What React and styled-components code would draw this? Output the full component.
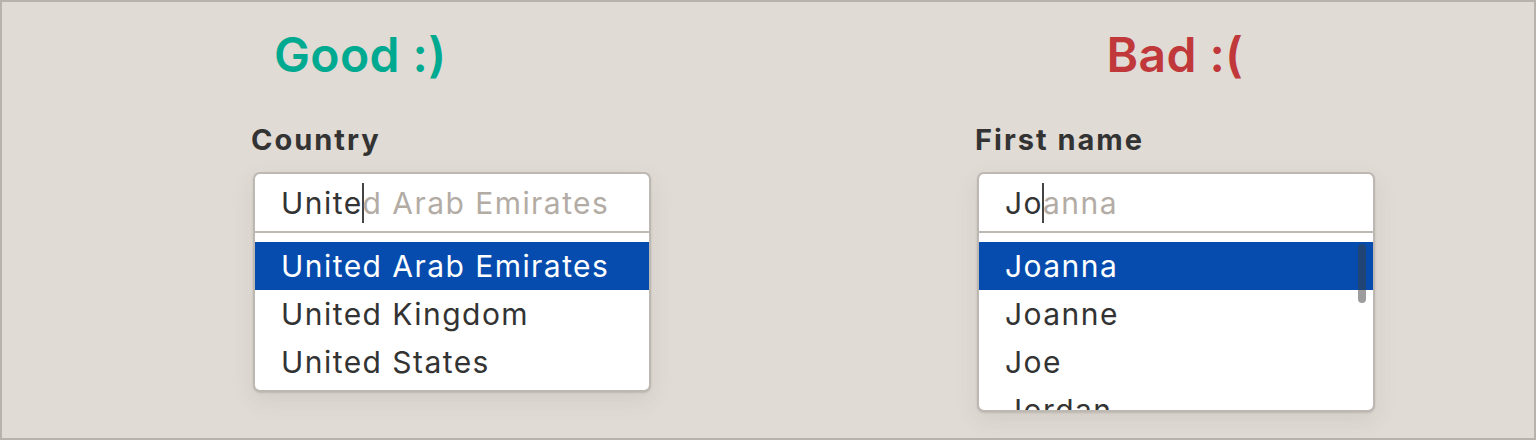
import React from "react";
import styled, { createGlobalStyle } from "styled-components";

const Global = createGlobalStyle`
  html, body { margin: 0; padding: 0; background: #e0dbd5; }
  * { box-sizing: border-box; }
`;

const Page = styled.div`
  width: 1536px;
  height: 440px;
  border: 2px solid #b7b2ac;
  background: #e0dbd5;
  font-family: Inter, "Noto Sans", sans-serif;
  color: #333;
  display: grid;
  grid-template-columns: 400px 400px;
  column-gap: 324px;
  padding: 24px 0 0 249px;
  overflow: hidden;
`;

const Column = styled.section`
  display: flex;
  flex-direction: column;
`;

const Title = styled.h1`
  margin: 0;
  font-size: 48px;
  line-height: 58px;
  font-weight: 600;
  letter-spacing: 0.4px;
  color: ${(p) => p.$color};
  text-align: ${(p) => (p.$center ? "center" : "left")};
  padding-left: ${(p) => p.$indent || 0}px;
`;

const Label = styled.label`
  margin-top: 38px;
  font-size: 29px;
  line-height: 36px;
  font-weight: 700;
  letter-spacing: 2px;
  color: #333;
`;

const Combo = styled.div`
  position: relative;
  margin: 14px 0 0 2px;
  width: 398px;
  background: #fff;
  border: 2px solid #bdb8b2;
  border-radius: 7px;
  overflow: hidden;
  box-shadow: 0 1px 2px rgba(0, 0, 0, 0.12), 0 8px 22px rgba(90, 80, 70, 0.1);
`;

const Input = styled.div`
  height: 59px;
  padding: 2px 0 0 26px;
  font-size: 30px;
  line-height: 55px;
  letter-spacing: 1.45px;
  color: #333;
  border-bottom: 2px solid #bdb8b2;
  white-space: nowrap;
`;

const Hint = styled.span`
  color: #b3aca5;
`;

const Caret = styled.span`
  display: inline-block;
  width: 2px;
  height: 40px;
  margin-left: -1px;
  margin-right: -1px;
  vertical-align: -9px;
  background: #444;
`;

const List = styled.ul`
  position: relative;
  list-style: none;
  margin: 0;
  padding: 9px 0 4px;
  max-height: ${(p) => (p.$maxHeight ? `${p.$maxHeight}px` : "none")};
  overflow: hidden;
`;

const Option = styled.li`
  height: 48px;
  padding-left: 26px;
  font-size: 30px;
  line-height: 48px;
  letter-spacing: 1.45px;
  white-space: nowrap;
  color: ${(p) => (p.$selected ? "#fff" : "#333")};
  background: ${(p) => (p.$selected ? "#054cae" : "transparent")};
`;

const Scrollbar = styled.div`
  position: absolute;
  top: 11px;
  right: 7px;
  width: 8px;
  height: 59px;
  border-radius: 4px;
  background: rgba(60, 60, 60, 0.5);
`;

export default function App() {
  return (
    <>
      <Global />
      <Page>
        <Column>
          <Title $color="#00aa90" $indent={23}>Good :)</Title>
          <Label>Country</Label>
          <Combo>
            <Input>
              Unite<Caret /><Hint>d Arab Emirates</Hint>
            </Input>
            <List>
              <Option $selected>United Arab Emirates</Option>
              <Option>United Kingdom</Option>
              <Option>United States</Option>
            </List>
          </Combo>
        </Column>
        <Column>
          <Title $color="#c0383a" $center>Bad :(</Title>
          <Label>First name</Label>
          <Combo>
            <Input>
              Jo<Caret /><Hint>anna</Hint>
            </Input>
            <List $maxHeight={177}>
              <Option $selected>Joanna</Option>
              <Option>Joanne</Option>
              <Option>Joe</Option>
              <Option>Jordan</Option>
              <Scrollbar />
            </List>
          </Combo>
        </Column>
      </Page>
    </>
  );
}
